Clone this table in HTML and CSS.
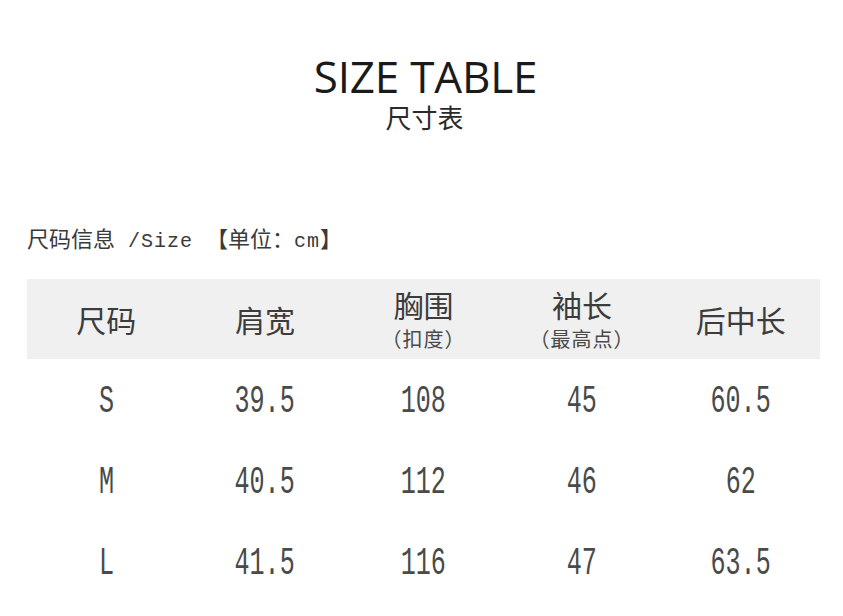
FILE: index.html
```html
<!DOCTYPE html>
<html lang="zh">
<head>
<meta charset="utf-8">
<link rel="stylesheet" href="styles.css">
</head>
<body>
<div class="page">
  <header class="title">
    <h1 class="title-en">SIZE TABLE</h1>
    <div class="title-zh">尺寸表</div>
  </header>
  <div class="info"><span class="zh">尺码信息</span><span class="mono"> /Size </span><span class="zh">【单位：</span><span class="mono">cm</span><span class="zh">】</span></div>
  <div class="table">
    <div class="row head">
      <div class="cell"><span class="h">尺码</span></div>
      <div class="cell"><span class="h">肩宽</span></div>
      <div class="cell"><span class="h">胸围</span><span class="sub">（扣度）</span></div>
      <div class="cell"><span class="h">袖长</span><span class="sub">（最高点）</span></div>
      <div class="cell"><span class="h">后中长</span></div>
    </div>
    <div class="row data">
      <div class="cell"><span class="num">S</span></div>
      <div class="cell"><span class="num">39.5</span></div>
      <div class="cell"><span class="num">108</span></div>
      <div class="cell"><span class="num">45</span></div>
      <div class="cell"><span class="num">60.5</span></div>
    </div>
    <div class="row data">
      <div class="cell"><span class="num">M</span></div>
      <div class="cell"><span class="num">40.5</span></div>
      <div class="cell"><span class="num">112</span></div>
      <div class="cell"><span class="num">46</span></div>
      <div class="cell"><span class="num">62</span></div>
    </div>
    <div class="row data">
      <div class="cell"><span class="num">L</span></div>
      <div class="cell"><span class="num">41.5</span></div>
      <div class="cell"><span class="num">116</span></div>
      <div class="cell"><span class="num">47</span></div>
      <div class="cell"><span class="num">63.5</span></div>
    </div>
  </div>
</div>
</body>
</html>
```
FILE: styles.css
```css
* { box-sizing: border-box; }
html, body { margin: 0; padding: 0; background: #fff; }
body { width: 843px; height: 616px; overflow: hidden; font-family: "Noto Sans CJK SC", "Noto Sans", sans-serif; }
.page { padding: 52px 23px 0 27px; }
.title { display: flex; flex-direction: column; align-items: center; margin-left: 4px; }
.title-en { margin: 0; font-family: "Open Sans", "Noto Sans", sans-serif; font-weight: 400; font-size: 44px; line-height: 48px; color: #1a1a1a; letter-spacing: -0.2px; }
.title-zh { font-size: 26px; line-height: 30px; color: #2a2a2a; margin-top: 2px; margin-left: -2px; }
.info { margin-top: 92px; color: #3a3a3a; font-size: 22px; line-height: 26px; white-space: pre; }
.info .mono { font-family: "Liberation Mono", monospace; font-size: 20px; letter-spacing: 1px; }
.table { margin-top: 24px; width: 793px; }
.row { display: grid; grid-template-columns: repeat(5, 1fr); }
.head { background: #f0f0f0; height: 80px; }
.cell { display: flex; flex-direction: column; align-items: center; justify-content: center; }
.h { font-size: 30px; line-height: 34px; color: #3c3c3c; }
.sub { font-size: 20px; line-height: 24px; color: #4a4a4a; margin-top: 6px; letter-spacing: 1px; white-space: pre; }
.data { height: 81px; }
.data:nth-child(2) { margin-top: 2px; }
.num { display: inline-block; font-family: "Liberation Mono", monospace; font-size: 38px; line-height: 40px; color: #4a4a4a; transform: scaleX(0.66); white-space: pre; }
```
